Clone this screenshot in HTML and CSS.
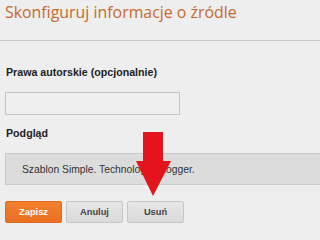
FILE: index.html
```html
<!DOCTYPE html>
<html lang="pl">
<head>
<meta charset="utf-8">
<link rel="stylesheet" href="styles.css">
</head>
<body>
<div class="page">
  <h1 class="title">Skonfiguruj informacje o źródle</h1>
  <div class="divider"></div>
  <section class="field">
    <div class="label">Prawa autorskie (opcjonalnie)</div>
    <div class="input"></div>
  </section>
  <section class="field field-preview">
    <div class="label">Podgląd</div>
    <div class="preview">Szablon Simple. Technologia Blogger.</div>
  </section>
  <div class="actions">
    <button class="btn btn-primary">Zapisz</button>
    <button class="btn">Anuluj</button>
    <button class="btn">Usuń</button>
  </div>
  <svg class="arrow" width="243" height="232" viewBox="0 0 243 232">
    <polygon points="143,132 163,132 163,161 171,161 153,196 136,161 143,161"/>
  </svg>
</div>
</body>
</html>
```
FILE: styles.css
```css
html, body {
  margin: 0;
  padding: 0;
  background: #eeeeee;
  overflow: hidden;
}
.page {
  position: relative;
  height: 232px;
  overflow: hidden;
  font-family: "Liberation Sans", Arial, sans-serif;
  color: #222;
}
.title {
  margin: 0;
  padding: 2px 0 0 5px;
  font-family: "Open Sans", sans-serif;
  font-weight: 400;
  font-size: 15.9px;
  line-height: 20px;
  color: #c8692b;
  white-space: nowrap;
}
.divider {
  margin-top: 18px;
  height: 1px;
  background: #c9c9c9;
}
.field {
  padding-left: 5px;
}
.label {
  margin: 25px 0 0 1px;
  font-weight: 700;
  font-size: 10.66px;
  line-height: 13px;
  color: #222;
}
.input {
  margin-top: 13px;
  width: 173px;
  height: 21px;
  border: 1px solid #c4c4c4;
  background: #efefef;
}
.field-preview .label {
  margin-top: 12px;
}
.preview {
  margin-top: 13px;
  margin-right: -12px;
  box-sizing: border-box;
  height: 32px;
  border: 1px solid #cccccc;
  background: #dcdcdc;
  padding: 1px 0 0 16px;
  font-size: 10.3px;
  line-height: 29px;
  color: #333;
  white-space: nowrap;
}
.actions {
  display: flex;
  gap: 4px;
  margin-top: 16px;
  padding-left: 5px;
}
.btn {
  box-sizing: border-box;
  width: 57px;
  height: 22px;
  margin: 0;
  padding: 0;
  border: 1px solid #c6c6c6;
  border-radius: 2px;
  background: linear-gradient(#e6e6e6, #dadada);
  font-family: "Liberation Sans", Arial, sans-serif;
  font-weight: 700;
  font-size: 9.3px;
  color: #444;
}
.btn-primary {
  background: linear-gradient(#f3802f, #e96f21);
  border-color: #e06a1e;
  color: #fff;
}
.arrow {
  position: absolute;
  left: 0;
  top: 0;
  fill: #e3141c;
  pointer-events: none;
}
```
